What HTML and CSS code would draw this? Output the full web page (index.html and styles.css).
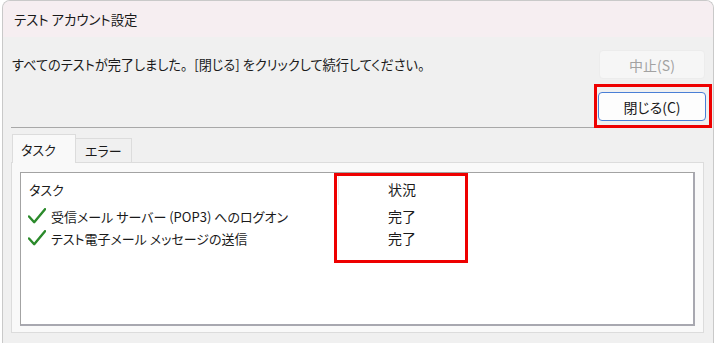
FILE: index.html
```html
<!DOCTYPE html>
<html lang="ja">
<head>
    <meta charset="UTF-8">
    <title>テスト アカウント設定</title>
    <link rel="stylesheet" href="styles.css">
</head>
<body>
    <div class="window">
        <div class="titlebar">テスト アカウント設定</div>
        <div class="content">
            <div class="msg-row">
                <p class="msg">すべてのテストが完了しました<span class="fw">。</span>[閉じる] をクリックして続行してください。</p>
                <button class="btn" disabled>中止(S)</button>
            </div>
            <div class="close-row">
                <div class="separator"></div>
                <div class="highlight">
                    <button class="btn btn-default">閉じる(C)</button>
                </div>
            </div>

            <div class="tabs">
                <div class="tab active">タスク</div>
                <div class="tab">エラー</div>
            </div>
            <div class="tab-page">
                <div class="list">
                    <div class="list-head">
                        <div class="col-task">タスク</div>
                        <div class="col-status">状況</div>
                    </div>
                    <div class="list-row">
                        <div class="col-task">
                            <svg class="check" viewBox="0 0 18 16" width="18" height="16">
                                <path d="M1 8.5 L6.2 14.2 L17 1.2" fill="none" stroke="#2b8a2b" stroke-width="2.4" stroke-linecap="round" stroke-linejoin="round"/>
                            </svg>
                            受信メール サーバー (POP3) へのログオン
                        </div>
                        <div class="col-status">完了</div>
                    </div>
                    <div class="list-row">
                        <div class="col-task">
                            <svg class="check" viewBox="0 0 18 16" width="18" height="16">
                                <path d="M1 8.5 L6.2 14.2 L17 1.2" fill="none" stroke="#2b8a2b" stroke-width="2.4" stroke-linecap="round" stroke-linejoin="round"/>
                            </svg>
                            テスト電子メール メッセージの送信
                        </div>
                        <div class="col-status">完了</div>
                    </div>
                    <!-- highlight over the status column -->
                    <div class="status-mark"></div>
                </div>
            </div>
        </div>
    </div>
</body>
</html>
```

FILE: styles.css
```css
* {
    margin: 0;
    padding: 0;
    box-sizing: border-box;
}

body {
    font-family: "Noto Sans CJK JP", "Noto Sans", sans-serif;
    font-feature-settings: "palt";
    font-size: 13px;
    color: #1a1a1a;
    background: #ffffff;
    overflow: hidden;
}

.window {
    margin-left: 2px;
    width: 712px;
    height: 360px;
    border: 1px solid #c9c9c9;
    border-bottom: none;
    border-radius: 8px 8px 0 0;
    overflow: hidden;
    background: #f0f0f0;
}

.titlebar {
    height: 36px;
    padding-left: 11px;
    display: flex;
    align-items: center;
    font-size: 13.4px;
    background: #f6eef1;
}

.content {
    padding: 13px 8px 0 9px;
}

.msg-row {
    display: flex;
    align-items: center;
    justify-content: space-between;
}

.msg {
    font-size: 13.2px;
}

.fw {
    font-feature-settings: normal;
}

.btn {
    font-family: inherit;
    font-feature-settings: "palt";
    font-size: 14px;
    width: 106px;
    height: 29px;
    border-radius: 4px;
    background: #fdfdfd;
    color: #1a1a1a;
    border: 1px solid #d0d0d0;
}

.btn:disabled {
    background: #f6f6f6;
    border-color: #ececec;
    color: #a2a2a2;
}

.btn-default {
    width: 108px;
    border: 1px solid #4a7fd6;
    background: #fdfdfd;
}

.close-row {
    display: flex;
    margin-top: 5px;
    margin-right: -7px;
}

.separator {
    flex: 1;
    align-self: flex-end;
    height: 1px;
    margin-left: -1px;
    background: #a8a8a8;
}

.highlight {
    border: 3px solid #ee0000;
    padding: 5px 3px 4px 1px;
}

.tabs {
    display: flex;
    align-items: flex-end;
    margin-top: 5px;
    height: 29px;
}

.tab {
    height: 24px;
    width: 56px;
    padding-left: 9px;
    display: flex;
    align-items: center;
    white-space: nowrap;
    background: #f0f0f0;
    border: 1px solid #dcdcdc;
    border-left: none;
    border-bottom: none;
}

.tab.active {
    height: 29px;
    width: 64px;
    padding-left: 8px;
    background: #f9f9f9;
    border-left: 1px solid #dcdcdc;
    margin-bottom: -1px;
    position: relative;
    z-index: 1;
}

.tab-page {
    margin-left: -1px;
    margin-right: 1px;
    height: 171px;
    padding: 9px 8px 6px 8px;
    background: #f9f9f9;
    border: 1px solid #dcdcdc;
}

.list {
    position: relative;
    height: 100%;
    background: #ffffff;
    border: 1px solid #a3a3a3;
    border-right: 2px solid #a8a8b0;
    border-bottom: 2px solid #a8a8b0;
}

.list-head,
.list-row {
    display: flex;
    align-items: center;
}

.list-head {
    height: 32px;
}

.list-head .col-task {
    padding-left: 8px;
}

.list-head .col-status {
    height: 100%;
    display: flex;
    align-items: center;
    justify-content: center;
    border-left: 1px solid #ececec;
    border-right: 1px solid #ececec;
}

.list-row {
    height: 22px;
}

.col-task {
    width: 317px;
    display: flex;
    align-items: center;
    padding-left: 7px;
}

.col-status {
    width: 128px;
    text-align: center;
    font-size: 14px;
}

.check {
    margin-right: 5px;
}

.status-mark {
    position: absolute;
    left: 313px;
    top: 0;
    width: 134px;
    height: 90px;
    border: 3px solid #ee0000;
}
```
